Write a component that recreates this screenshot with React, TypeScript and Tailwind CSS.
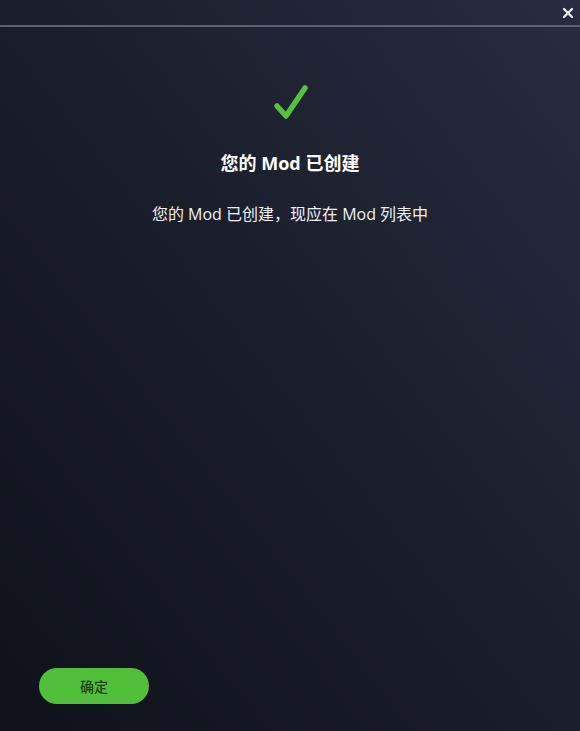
import { X } from 'lucide-react';

export default function App() {
  return (
    <div
      className="w-[580px] h-[731px] flex flex-col bg-gradient-to-tr from-[#0f121a] via-[#1a1e2b] to-[#272c3f] text-white overflow-hidden"
      style={{ fontFamily: '"Open Sans", "Noto Sans CJK SC", sans-serif' }}
    >
      <div className="h-[27px] shrink-0 flex items-center justify-end pr-[4px] border-b-2 border-[#5b6170]">
        <X size={16} strokeWidth={3.5} className="text-[#e8eaf0]" />
      </div>

      <div className="flex flex-col items-center pt-[56px]">
        <svg width="36" height="38" viewBox="0 0 36 38" className="ml-[1px]">
          <path
            d="M4 23 L13 33 L32 5"
            fill="none"
            stroke="#55c23d"
            strokeWidth="5.5"
            strokeLinecap="round"
            strokeLinejoin="round"
          />
        </svg>
        <h1 className="mt-[29px] text-[18px] font-bold leading-[26px]">您的 Mod 已创建</h1>
        <p className="mt-[27px] text-[16px] leading-[22px] text-[#eef0f5]">您的 Mod 已创建，现应在 Mod 列表中</p>
      </div>

      <div className="mt-auto pl-[39px] pb-[27px]">
        <button className="w-[110px] h-[36px] rounded-full bg-[#52bf3b] text-[14px] font-medium text-[#1c3f14]">
          确定
        </button>
      </div>
    </div>
  );
}
